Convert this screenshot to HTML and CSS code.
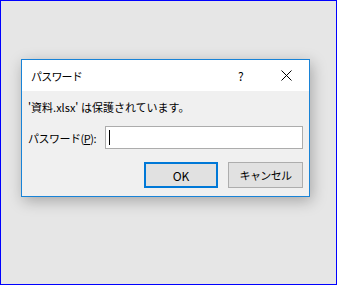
FILE: index.html
```html
<!DOCTYPE html>
<html lang="ja">
<head>
    <meta charset="UTF-8">
    <title>パスワード</title>
    <link rel="stylesheet" href="styles.css">
</head>
<body>
    <div class="dialog">
        <div class="title-bar">
            <span class="title">パスワード</span>
            <span class="help">?</span>
            <span class="close">
                <svg width="11" height="11" viewBox="0 0 11 11">
                    <path d="M0.5 0.5 L10.5 10.5 M10.5 0.5 L0.5 10.5" stroke="#000" stroke-width="1" fill="none"/>
                </svg>
            </span>
        </div>
        <div class="content">
            <p class="message">'資料.xlsx' は保護されています。</p>
            <div class="field">
                <label class="label" for="pw">パスワード(<u>P</u>):</label>
                <div class="input"><span class="caret"></span></div>
            </div>
            <div class="buttons">
                <button class="btn default">OK</button>
                <button class="btn cancel">キャンセル</button>
            </div>
        </div>
    </div>
</body>
</html>
```

FILE: styles.css
```css
html, body {
    margin: 0;
    padding: 0;
}
body {
    font-family: "Noto Sans CJK JP", "Noto Sans", sans-serif;
    font-size: 11px;
    color: #000;
    background-color: #e6e6e6;
    border: 1px solid #0000ff;
    box-sizing: border-box;
    width: 337px;
    height: 285px;
    padding-top: 58px;
    padding-left: 20px;
}
.dialog {
    width: 289px;
    box-sizing: border-box;
    border: 1px solid #1883d7;
    background-color: #f0f0f0;
    box-shadow: 2px 4px 14px rgba(0, 0, 0, 0.28);
}
.title-bar {
    height: 31px;
    background-color: #fff;
    display: flex;
    align-items: center;
    padding-left: 9px;
}
.title {
    flex: 1;
    font-size: 11px;
    letter-spacing: -0.8px;
}
.help {
    width: 10px;
    font-size: 12px;
    margin-right: 33px;
}
.close {
    display: flex;
    margin-right: 17px;
}
.content {
    padding: 8px 6px 8px 6px;
}
.message {
    margin: 0;
    line-height: 16px;
}
.field {
    display: flex;
    align-items: center;
    margin-top: 11px;
}
.label {
    width: 77px;
    letter-spacing: -0.5px;
}
.input {
    flex: 1;
    height: 23px;
    box-sizing: border-box;
    border: 1px solid #acacac;
    background-color: #fff;
    display: flex;
    align-items: center;
    padding-left: 3px;
}
.caret {
    width: 1px;
    height: 15px;
    background-color: #000;
}
.buttons {
    display: flex;
    justify-content: flex-end;
    gap: 10px;
    margin-top: 13px;
}
.btn {
    height: 26px;
    font-family: "Noto Sans CJK JP", "Noto Sans", sans-serif;
    font-size: 11px;
    color: #000;
    background-color: #e1e1e1;
    border: 1px solid #adadad;
    padding: 0;
    box-sizing: border-box;
}
.default {
    width: 74px;
    font-size: 12px;
    border: 2px solid #0078d7;
}
.cancel {
    width: 75px;
    letter-spacing: -0.6px;
}
```
